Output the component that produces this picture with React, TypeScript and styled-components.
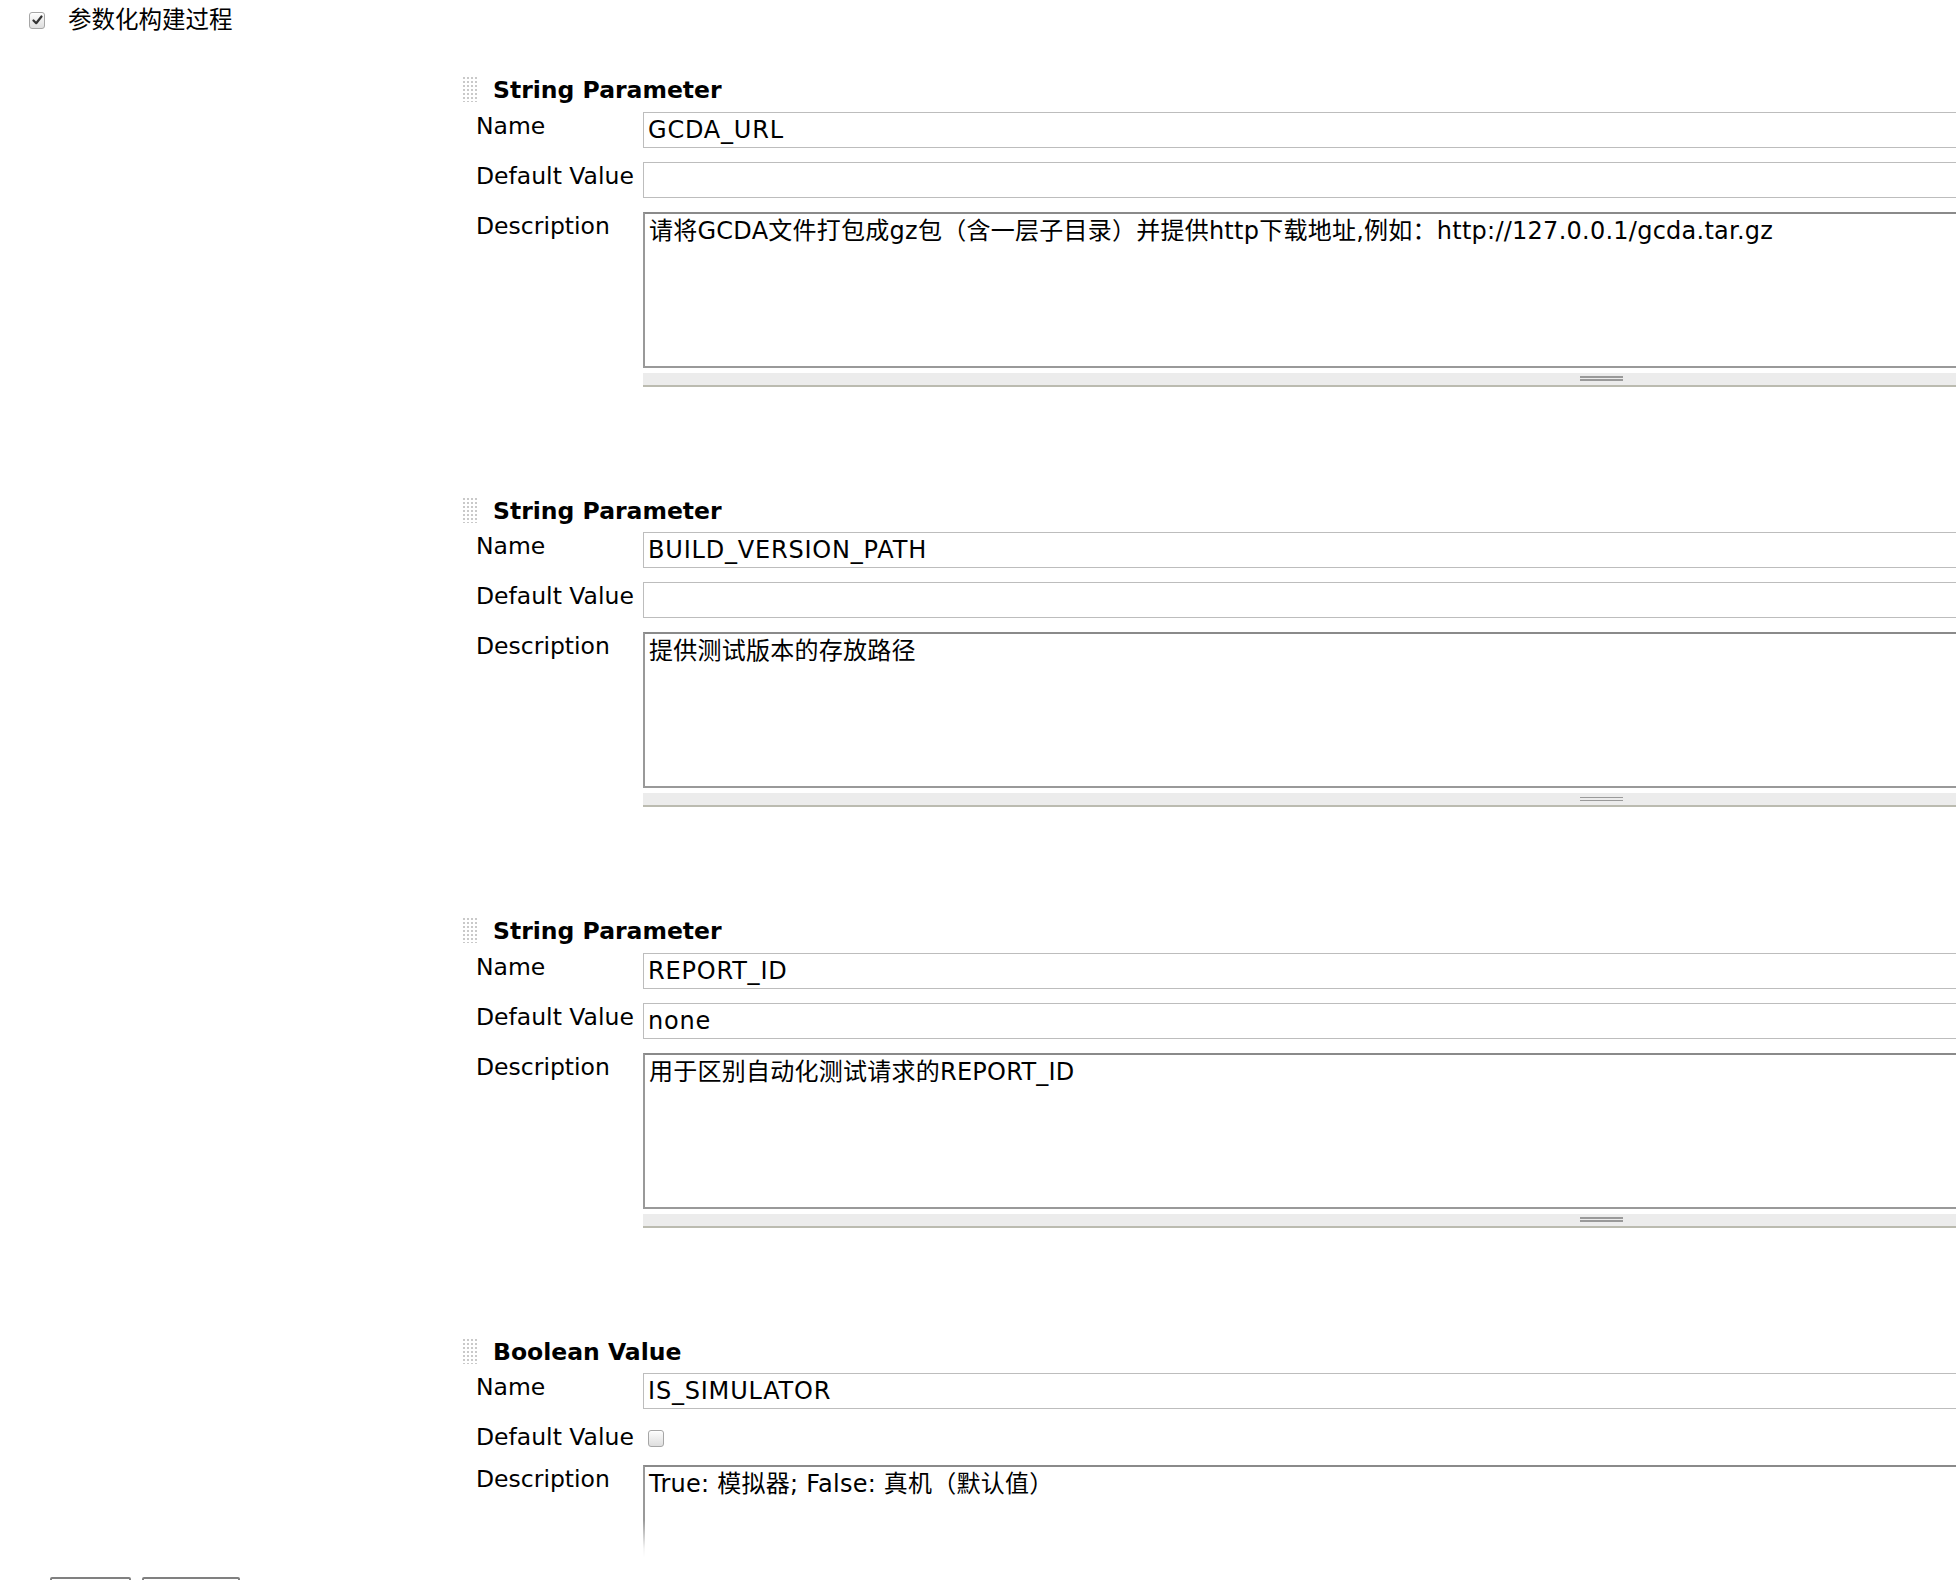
import React from "react";
import styled, { createGlobalStyle } from "styled-components";

interface Param {
  kind: "string" | "boolean";
  title: string;
  name: string;
  defaultValue?: string;
  description: string;
}

const params: Param[] = [
  {
    kind: "string",
    title: "String Parameter",
    name: "GCDA_URL",
    defaultValue: "",
    description:
      "请将GCDA文件打包成gz包（含一层子目录）并提供http下载地址,例如：http://127.0.0.1/gcda.tar.gz",
  },
  {
    kind: "string",
    title: "String Parameter",
    name: "BUILD_VERSION_PATH",
    defaultValue: "",
    description: "提供测试版本的存放路径",
  },
  {
    kind: "string",
    title: "String Parameter",
    name: "REPORT_ID",
    defaultValue: "none",
    description: "用于区别自动化测试请求的REPORT_ID",
  },
  {
    kind: "boolean",
    title: "Boolean Value",
    name: "IS_SIMULATOR",
    description: "True: 模拟器; False: 真机（默认值）",
  },
];

const FONT = `"DejaVu Sans", "Noto Sans CJK SC", sans-serif`;

const GlobalStyle = createGlobalStyle`
  html, body {
    margin: 0;
    padding: 0;
    overflow: hidden;
    background: #fff;
    font-family: ${FONT};
    color: #000;
  }
`;

const Page = styled.div`
  position: relative;
  min-height: 1580px;
`;

const TopOption = styled.label`
  display: flex;
  align-items: center;
  gap: 23px;
  padding: 6px 0 0 29px;
  height: 28px;
  font-size: 23.5px;
  line-height: 28px;
`;

const CheckBox = styled.span<{ $checked?: boolean }>`
  display: inline-flex;
  align-items: center;
  justify-content: center;
  box-sizing: border-box;
  width: 16px;
  height: 17px;
  border: 1px solid #a6a6a6;
  border-radius: 3px;
  background: linear-gradient(#fdfdfd, #dedede);
  box-shadow: inset 0 1px 0 #fff;
  flex-shrink: 0;

  svg {
    display: ${(p) => (p.$checked ? "block" : "none")};
  }
`;

const ParamList = styled.div`
  display: flex;
  flex-direction: column;
  gap: 109px;
  padding: 41px 0 0 462px;
`;

const Block = styled.div`
  display: flex;
  flex-direction: column;
`;

const Header = styled.div`
  display: flex;
  align-items: flex-start;
  gap: 14px;
  height: 27px;
`;

const DragHandle = styled.span`
  width: 17px;
  height: 27px;
  background-image: radial-gradient(circle, #c9c9c9 0.9px, transparent 1.3px);
  background-size: 4px 4px;
  background-position: 0 1px;
`;

const Title = styled.span`
  margin-top: 2px;
  font-size: 23.5px;
  font-weight: bold;
  line-height: 27px;
`;

const Form = styled.div`
  display: grid;
  grid-template-columns: 167px 1916px;
  row-gap: 14px;
  margin-top: 9.5px;
  padding-left: 14px;
`;

const Label = styled.div`
  font-size: 23.5px;
  line-height: 28px;
  white-space: nowrap;
`;

const TextInput = styled.input`
  box-sizing: border-box;
  width: 100%;
  height: 36px;
  margin: 0;
  padding: 0 4px;
  border: 1px solid #bdbdbd;
  font-family: ${FONT};
  font-size: 24px;
  letter-spacing: 0.8px;
  color: #000;
  background: #fff;
  outline: none;
`;

const CheckCell = styled.div`
  height: 27px;
  padding: 7px 0 0 5px;
  box-sizing: border-box;
`;

const AreaCell = styled.div`
  display: flex;
  flex-direction: column;
  gap: 5px;
`;

const TextArea = styled.textarea`
  box-sizing: border-box;
  width: 100%;
  height: 156px;
  margin: 0;
  padding: 3px 4px;
  border: 2px solid #999;
  border-top-color: #8a8a8a;
  font-family: ${FONT};
  font-size: 24px;
  line-height: 28px;
  letter-spacing: 0.25px;
  color: #000;
  background: #fff;
  resize: none;
  outline: none;
  overflow: hidden;
`;

const ResizeBar = styled.div`
  display: flex;
  flex-direction: column;
  align-items: center;
  justify-content: center;
  gap: 1.5px;
  height: 12px;
  background: #ececec;
  border-bottom: 2px solid #bbbbb0;
`;

const GripLine = styled.span`
  width: 43px;
  height: 1.5px;
  background: #9a9a9a;
`;

const BottomSticker = styled.div`
  position: absolute;
  left: 0;
  right: 0;
  top: 1520px;
  height: 60px;
  background: linear-gradient(
    rgba(255, 255, 255, 0) 0px,
    rgba(255, 255, 255, 0.9) 28px,
    #fff 37px
  );
`;

const ButtonBar = styled.div`
  display: flex;
  gap: 11px;
  padding: 57px 0 0 50px;
`;

const Button = styled.button<{ $width: number }>`
  width: ${(p) => p.$width}px;
  height: 34px;
  border: 2px solid #808080;
  border-radius: 2px;
  background: linear-gradient(#fff, #e6e6e6);
`;

const Check: React.FC<{ checked?: boolean }> = ({ checked }) => (
  <CheckBox $checked={checked}>
    <svg width="11" height="10" viewBox="0 0 11 10">
      <path
        d="M1.5 5.5 L4.2 8.2 L9.5 1.5"
        fill="none"
        stroke="#333"
        strokeWidth="2.2"
        strokeLinecap="round"
        strokeLinejoin="round"
      />
    </svg>
  </CheckBox>
);

const ParamBlock: React.FC<{ param: Param }> = ({ param }) => (
  <Block>
    <Header>
      <DragHandle />
      <Title>{param.title}</Title>
    </Header>
    <Form>
      <Label>Name</Label>
      <TextInput defaultValue={param.name} />
      <Label>Default Value</Label>
      {param.kind === "boolean" ? (
        <CheckCell>
          <Check />
        </CheckCell>
      ) : (
        <TextInput defaultValue={param.defaultValue} />
      )}
      <Label>Description</Label>
      <AreaCell>
        <TextArea defaultValue={param.description} />
        <ResizeBar>
          <GripLine />
          <GripLine />
        </ResizeBar>
      </AreaCell>
    </Form>
  </Block>
);

export default function App() {
  return (
    <Page>
      <GlobalStyle />
      <TopOption>
        <Check checked />
        参数化构建过程
      </TopOption>
      <ParamList>
        {params.map((p, i) => (
          <ParamBlock key={i} param={p} />
        ))}
      </ParamList>
      <BottomSticker>
        <ButtonBar>
          <Button $width={81} aria-label="保存" />
          <Button $width={98} aria-label="Apply" />
        </ButtonBar>
      </BottomSticker>
    </Page>
  );
}
